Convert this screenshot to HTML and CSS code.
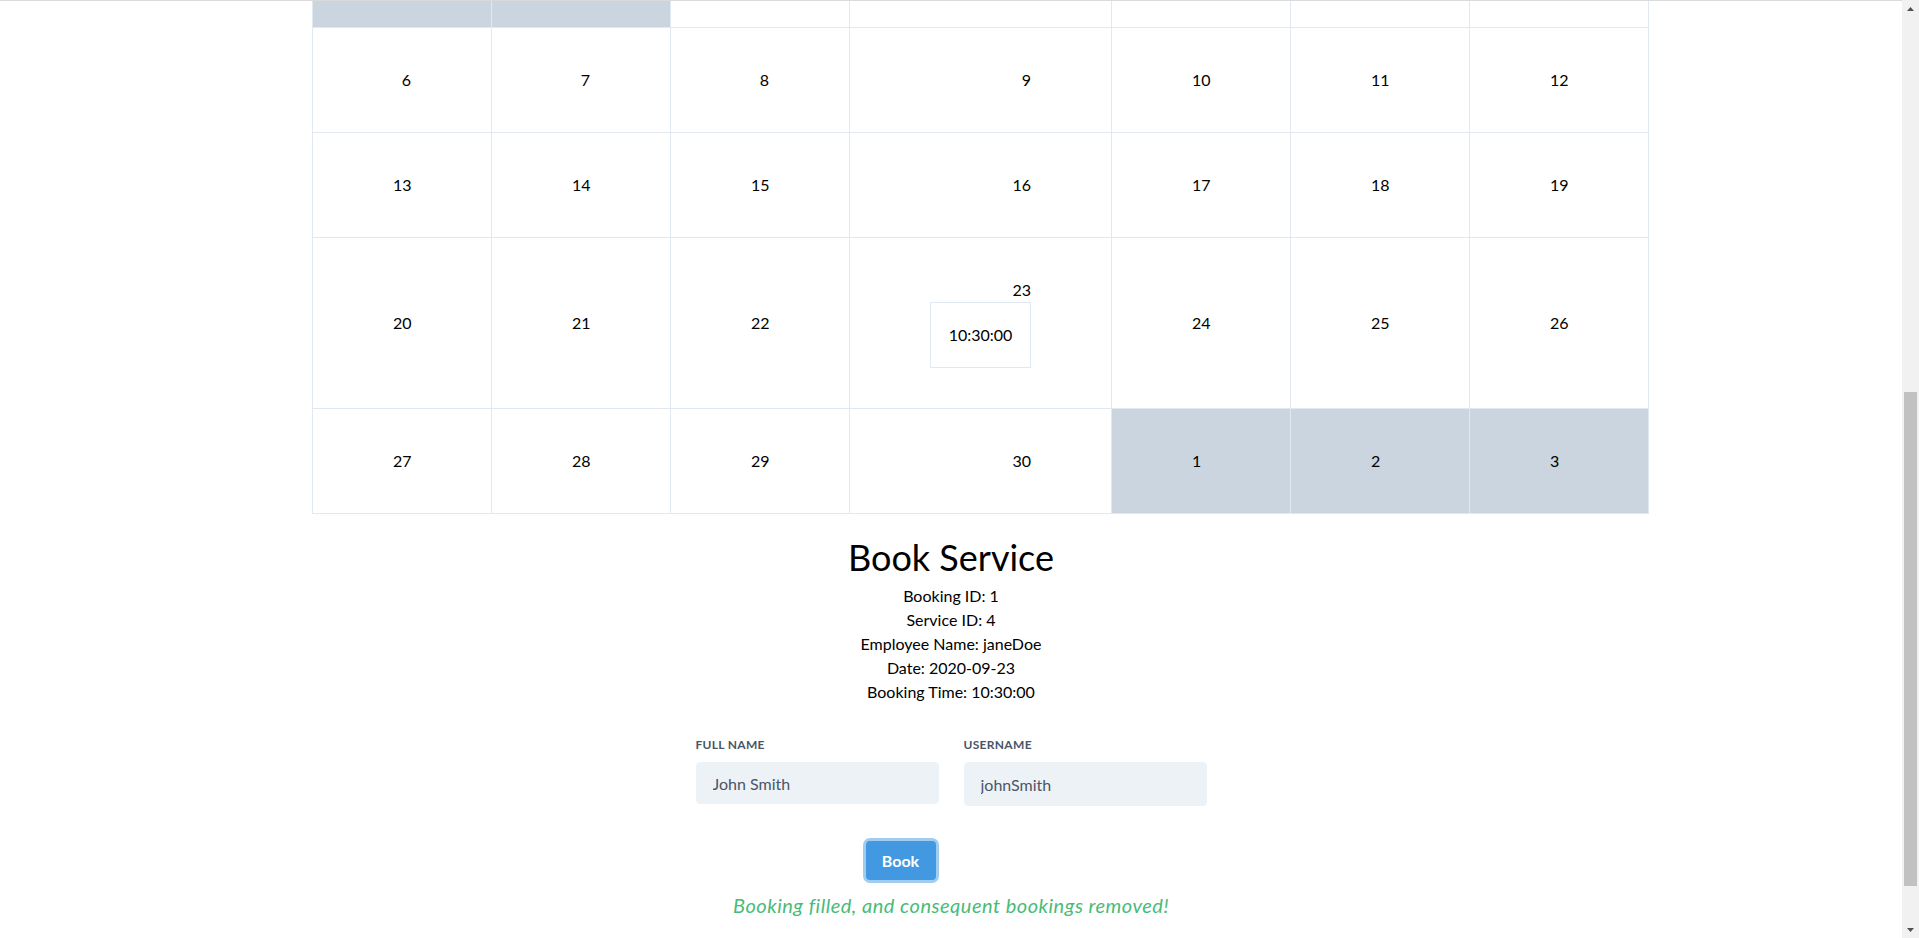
FILE: index.html
```html
<!DOCTYPE html>
<html lang="en">
<head>
<meta charset="utf-8">
<title>Book Service</title>
<link rel="stylesheet" href="styles.css">
</head>
<body>
<div class="window">
  <main class="page">
    <div class="content">
      <table class="calendar">
        <colgroup>
          <col class="col-day"><col class="col-day"><col class="col-day"><col class="col-wide"><col class="col-day"><col class="col-day"><col class="col-day">
        </colgroup>
        <tbody>
          <tr class="week-cut">
            <td class="other"></td><td class="other"></td><td></td><td></td><td></td><td></td><td></td>
          </tr>
          <tr>
            <td>6</td><td>7</td><td>8</td><td>9</td><td>10</td><td>11</td><td>12</td>
          </tr>
          <tr>
            <td>13</td><td>14</td><td>15</td><td>16</td><td>17</td><td>18</td><td>19</td>
          </tr>
          <tr>
            <td>20</td><td>21</td><td>22</td>
            <td><div class="day-num">23</div><div class="slot">10:30:00</div></td>
            <td>24</td><td>25</td><td>26</td>
          </tr>
          <tr>
            <td>27</td><td>28</td><td>29</td><td>30</td><td class="other">1</td><td class="other">2</td><td class="other">3</td>
          </tr>
        </tbody>
      </table>

      <section class="booking">
        <h1 class="booking-title">Book Service</h1>
        <p class="info">Booking ID: 1</p>
        <p class="info">Service ID: 4</p>
        <p class="info">Employee Name: janeDoe</p>
        <p class="info">Date: 2020-09-23</p>
        <p class="info">Booking Time: 10:30:00</p>

        <form class="form">
          <div class="fields">
            <div class="field">
              <label class="label" for="fullname">Full Name</label>
              <input class="input" id="fullname" type="text" value="John Smith">
            </div>
            <div class="field">
              <label class="label" for="username">Username</label>
              <input class="input input-tall" id="username" type="text" value="johnSmith">
            </div>
          </div>
          <div class="actions">
            <button class="btn" type="button">Book</button>
          </div>
        </form>

        <p class="success">Booking filled, and consequent bookings removed!</p>
      </section>
    </div>
  </main>

  <div class="scrollbar">
    <div class="sb-arrow">
      <svg width="7" height="4" viewBox="0 0 7 4"><path d="M0 4 L3.5 0 L7 4 Z" fill="#505050"/></svg>
    </div>
    <div class="sb-track">
      <div class="sb-thumb"></div>
    </div>
    <div class="sb-arrow">
      <svg width="7" height="4" viewBox="0 0 7 4"><path d="M0 0 L7 0 L3.5 4 Z" fill="#505050"/></svg>
    </div>
  </div>
</div>
</body>
</html>
```

FILE: styles.css
```css
* {
  box-sizing: border-box;
}

html,
body {
  margin: 0;
  padding: 0;
  height: 100%;
}

body {
  font-family: Lato, "Open Sans", "DejaVu Sans", sans-serif;
  font-size: 16px;
  color: #000;
  background: #fff;
  overflow: hidden;
}

.window {
  display: flex;
  height: 938px;
}

.page {
  flex: 1;
  min-width: 0;
  border-top: 1px solid #dadada;
  display: flex;
  flex-direction: column;
  justify-content: flex-end;
  overflow: hidden;
}

.content {
  flex-shrink: 0;
  padding-bottom: 18px;
}

/* Calendar */
.calendar {
  border-collapse: collapse;
  table-layout: fixed;
  width: 1337px;
  margin-left: 312px;
}

.col-day {
  width: 179px;
}

.col-wide {
  width: 262px;
}

.calendar td {
  border: 1px solid #e2e8f0;
  padding: 40px 80px;
  text-align: right;
  vertical-align: middle;
  font-size: 16px;
  line-height: 24px;
}

.week-cut td {
  height: 105px;
}

.calendar td.other {
  background: #cbd5e0;
  text-align: left;
}

.day-num {
  text-align: right;
}

.slot {
  border: 1px solid #e2e8f0;
  padding: 20px 0;
  text-align: center;
  line-height: 24px;
}

/* Booking section */
.booking {
  text-align: center;
}

.booking-title {
  margin: 16px 0 0;
  font-size: 36px;
  line-height: 54px;
  font-weight: 400;
}

.info {
  margin: 0;
  font-size: 16px;
  line-height: 24px;
}

.form {
  width: 511px;
  margin: 32px auto 0;
  text-align: left;
}

.fields {
  display: flex;
  gap: 25px;
  align-items: flex-start;
}

.field {
  width: 243px;
}

.label {
  display: block;
  text-transform: uppercase;
  letter-spacing: 0.025em;
  color: #4a5568;
  font-size: 12px;
  line-height: 18px;
  font-weight: 700;
  margin-bottom: 8px;
}

.input {
  display: block;
  width: 100%;
  height: 42px;
  padding: 0 16px;
  border: 1px solid #edf2f7;
  border-radius: 4px;
  background: #edf2f7;
  color: #4a5568;
  font-family: inherit;
  font-size: 16px;
  outline: none;
}

.input-tall {
  height: 44px;
}

.actions {
  display: flex;
  padding-left: 170px;
  margin-top: 35px;
}

.btn {
  width: 70px;
  height: 39px;
  border: none;
  border-radius: 4px;
  background: #4299e1;
  color: #fff;
  font-family: inherit;
  font-size: 16px;
  font-weight: 700;
  box-shadow: 0 0 0 3px rgba(66, 153, 225, 0.5);
  cursor: pointer;
}

.success {
  margin: 10px 0 0;
  font-size: 20px;
  line-height: 30px;
  font-style: italic;
  letter-spacing: 0.5px;
  color: #48bb78;
}

/* Fake browser scrollbar */
.scrollbar {
  width: 17px;
  flex-shrink: 0;
  display: flex;
  flex-direction: column;
  background: #f1f1f1;
}

.sb-arrow {
  height: 17px;
  display: flex;
  align-items: center;
  justify-content: center;
  flex-shrink: 0;
}

.sb-track {
  flex: 1;
  padding: 375px 2px 0;
}

.sb-thumb {
  height: 494px;
  background: #c1c1c1;
}
```
